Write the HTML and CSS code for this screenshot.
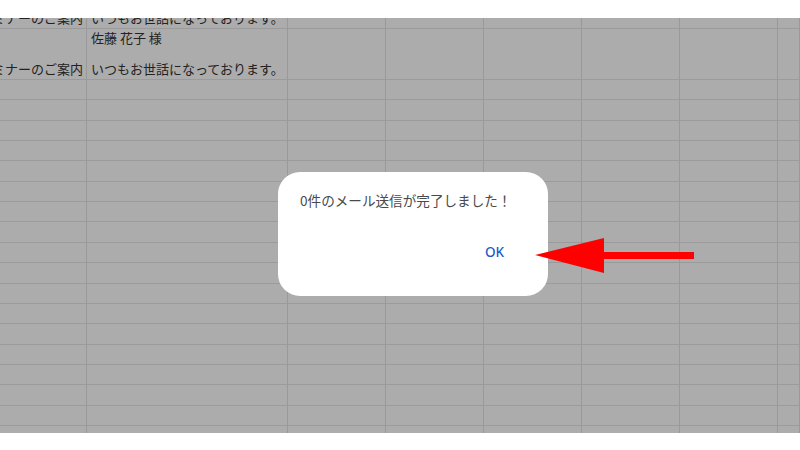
FILE: index.html
```html
<!DOCTYPE html>
<html lang="ja">
<head>
<meta charset="utf-8">
<title>送信完了</title>
<link rel="stylesheet" href="styles.css">
</head>
<body>
<div class="sheet">
  <div class="grid">
    <div class="c left">セミナーのご案内</div><div class="c">いつもお世話になっております。</div><div class="c"></div><div class="c"></div><div class="c"></div><div class="c"></div><div class="c"></div><div class="c"></div>
    <div class="c left">セミナーのご案内</div><div class="c">佐藤 花子 様<br><br>いつもお世話になっております。</div><div class="c"></div><div class="c"></div><div class="c"></div><div class="c"></div><div class="c"></div><div class="c"></div>
    <div class="c"></div><div class="c"></div><div class="c"></div><div class="c"></div><div class="c"></div><div class="c"></div><div class="c"></div><div class="c"></div>
    <div class="c"></div><div class="c"></div><div class="c"></div><div class="c"></div><div class="c"></div><div class="c"></div><div class="c"></div><div class="c"></div>
    <div class="c"></div><div class="c"></div><div class="c"></div><div class="c"></div><div class="c"></div><div class="c"></div><div class="c"></div><div class="c"></div>
    <div class="c"></div><div class="c"></div><div class="c"></div><div class="c"></div><div class="c"></div><div class="c"></div><div class="c"></div><div class="c"></div>
    <div class="c"></div><div class="c"></div><div class="c"></div><div class="c"></div><div class="c"></div><div class="c"></div><div class="c"></div><div class="c"></div>
    <div class="c"></div><div class="c"></div><div class="c"></div><div class="c"></div><div class="c"></div><div class="c"></div><div class="c"></div><div class="c"></div>
    <div class="c"></div><div class="c"></div><div class="c"></div><div class="c"></div><div class="c"></div><div class="c"></div><div class="c"></div><div class="c"></div>
    <div class="c"></div><div class="c"></div><div class="c"></div><div class="c"></div><div class="c"></div><div class="c"></div><div class="c"></div><div class="c"></div>
    <div class="c"></div><div class="c"></div><div class="c"></div><div class="c"></div><div class="c"></div><div class="c"></div><div class="c"></div><div class="c"></div>
    <div class="c"></div><div class="c"></div><div class="c"></div><div class="c"></div><div class="c"></div><div class="c"></div><div class="c"></div><div class="c"></div>
    <div class="c"></div><div class="c"></div><div class="c"></div><div class="c"></div><div class="c"></div><div class="c"></div><div class="c"></div><div class="c"></div>
    <div class="c"></div><div class="c"></div><div class="c"></div><div class="c"></div><div class="c"></div><div class="c"></div><div class="c"></div><div class="c"></div>
    <div class="c"></div><div class="c"></div><div class="c"></div><div class="c"></div><div class="c"></div><div class="c"></div><div class="c"></div><div class="c"></div>
    <div class="c"></div><div class="c"></div><div class="c"></div><div class="c"></div><div class="c"></div><div class="c"></div><div class="c"></div><div class="c"></div>
    <div class="c"></div><div class="c"></div><div class="c"></div><div class="c"></div><div class="c"></div><div class="c"></div><div class="c"></div><div class="c"></div>
    <div class="c"></div><div class="c"></div><div class="c"></div><div class="c"></div><div class="c"></div><div class="c"></div><div class="c"></div><div class="c"></div>
    <div class="c"></div><div class="c"></div><div class="c"></div><div class="c"></div><div class="c"></div><div class="c"></div><div class="c"></div><div class="c"></div>
    <div class="c"></div><div class="c"></div><div class="c"></div><div class="c"></div><div class="c"></div><div class="c"></div><div class="c"></div><div class="c"></div>
    <div class="c"></div><div class="c"></div><div class="c"></div><div class="c"></div><div class="c"></div><div class="c"></div><div class="c"></div><div class="c"></div>
  </div>
</div>

<div class="dialog">
  <p class="message">0件のメール送信が完了しました！</p>
  <div class="actions"><button class="ok">OK</button></div>
</div>

<svg class="arrow" width="170" height="40" viewBox="0 0 170 40">
  <polygon points="0,17 69,0 69,14 159,14 159,21 69,21 69,35" fill="#ff0000"/>
</svg>
</body>
</html>
```

FILE: styles.css
```css
html, body {
  margin: 0;
  padding: 0;
  background: #ffffff;
}
body {
  width: 800px;
  height: 450px;
  overflow: hidden;
  position: relative;
  font-family: "Noto Sans CJK JP", "Noto Sans", sans-serif;
}
.sheet {
  margin-top: 18px;
  height: 415px;
  overflow: hidden;
  background: #acacac;
}
.grid {
  margin-top: -10.4px;
  display: grid;
  grid-template-columns: 87px 201px 98px 98px 98px 98px 98px 1fr;
  grid-template-rows: 20.9px 51.3px repeat(19, 20.38px);
}
.c {
  box-sizing: border-box;
  border-right: 1px solid #999999;
  border-bottom: 1px solid #9b9b9b;
  padding: 0 4px 2px 4px;
  font-size: 13px;
  line-height: 15.5px;
  color: #222222;
  white-space: nowrap;
  overflow: hidden;
  display: flex;
  flex-direction: column;
  justify-content: flex-end;
}
.c.left {
  align-items: flex-end;
  padding-right: 3px;
}
.dialog {
  position: absolute;
  left: 278px;
  top: 172px;
  width: 270px;
  height: 124px;
  box-sizing: border-box;
  background: #ffffff;
  border-radius: 22px;
  padding: 18px 44px 0 22px;
  display: flex;
  flex-direction: column;
}
.message {
  margin: 0;
  font-size: 13.6px;
  line-height: 20px;
  color: #4a4a4a;
  white-space: nowrap;
}
.actions {
  display: flex;
  justify-content: flex-end;
  margin-top: 32px;
}
.ok {
  border: none;
  background: none;
  padding: 0;
  font-family: "Noto Sans", sans-serif;
  font-size: 13.5px;
  font-weight: 500;
  line-height: 20px;
  color: #1a5bd0;
}
.arrow {
  position: absolute;
  left: 535px;
  top: 238px;
}
```
